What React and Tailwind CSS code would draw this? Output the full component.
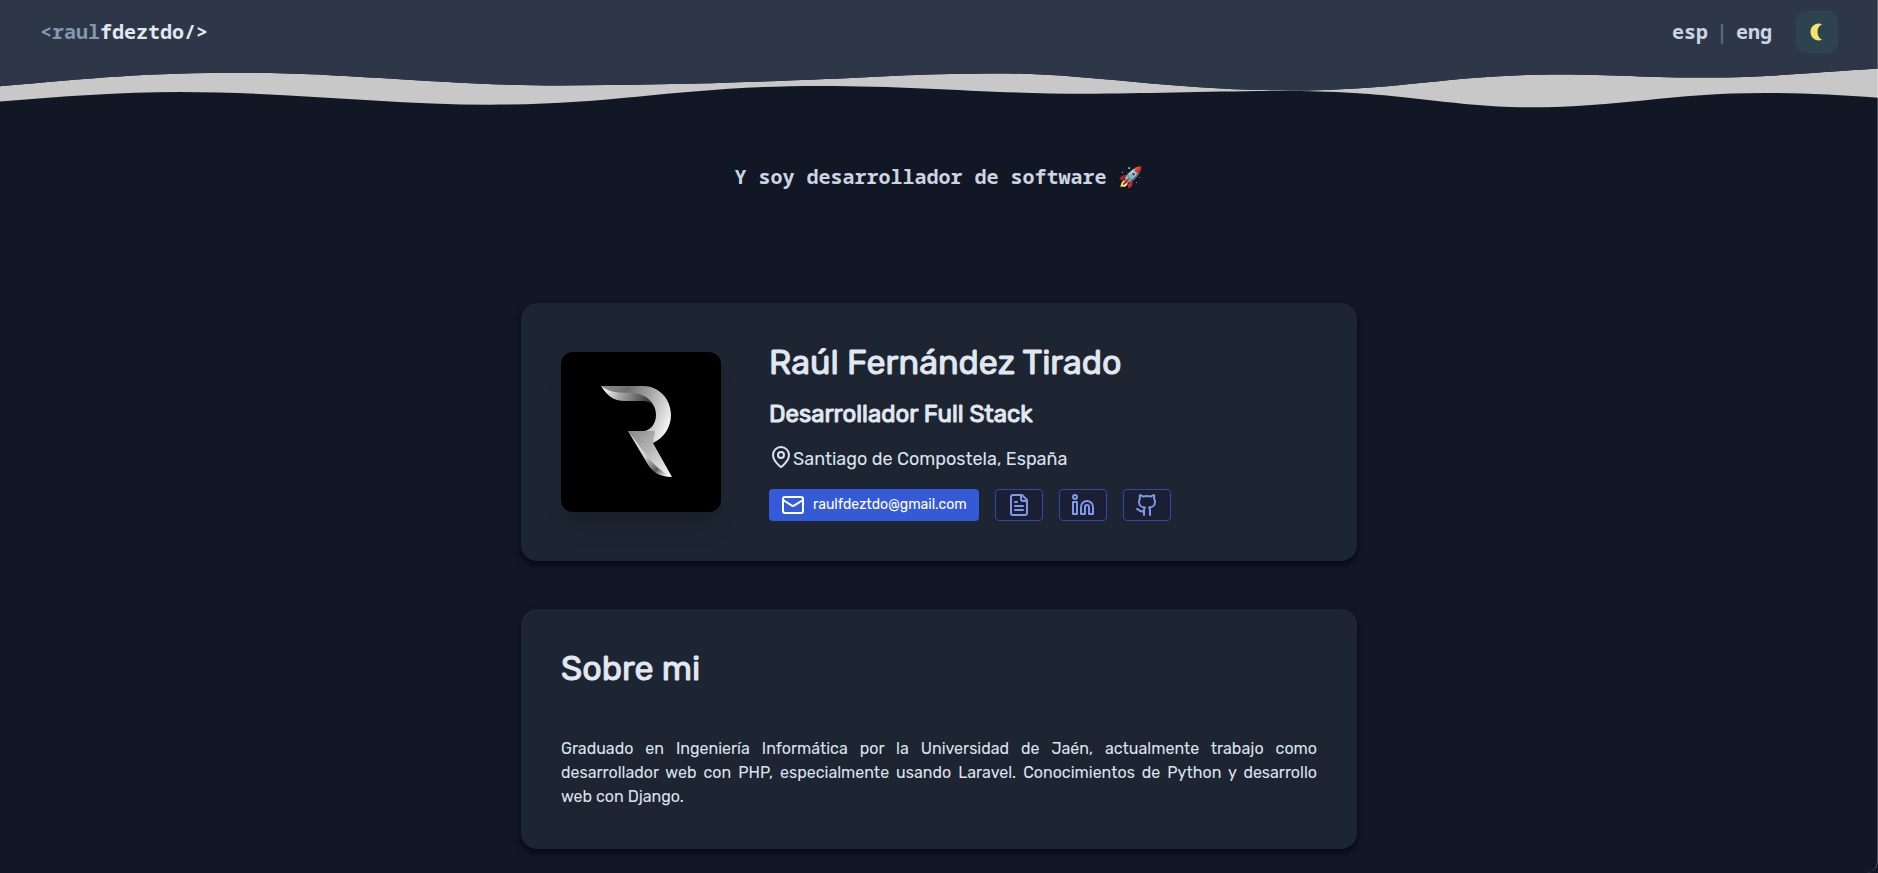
import { useState } from "react";
import { LuMail, LuMapPin, LuFileText, LuLinkedin, LuGithub } from "react-icons/lu";

const MONO = "font-['Noto_Sans_Mono','DejaVu_Sans_Mono',monospace]";
const HEADING = "font-normal [-webkit-text-stroke:1px_#e2e8f0]";

function Waves() {
  return (
    <svg
      className="block h-[120px] w-full"
      viewBox="0 0 1878 120"
      preserveAspectRatio="none"
      aria-hidden="true"
    >
      <path
        fill="#c8c8c8"
        d="M0 86.3 C90 78 150 72.7 240 72.7 C350 72.7 440 85.4 560 85.4 C640 85.4 740 83 826 79 C880 76.500 930 73.400 999 73.400 C1090 73.400 1170 90.500 1290 90.500 C1400 90.500 1450 74.400 1560 74.400 C1610 74.400 1650 77.600 1710 77.600 C1760 77.600 1810 73 1878 68.600 V97.700 C1840 95 1800 93 1765 93 C1670 93 1620 107.300 1530 107.300 C1450 107.300 1400 91 1290 91 C1210 91 1150 93.700 1085 93.700 C990 93.700 920 85.900 820 85.900 C680 85.900 620 104.700 490 104.700 C390 104.700 290 92 180 92 C120 92 60 96.500 0 101.500 Z"
      />
      <path
        fill="#2d3748"
        d="M0 0 H1878 V68.600 C1810 73 1760 77.600 1710 77.600 C1650 77.600 1610 74.400 1560 74.400 C1450 74.400 1400 90.500 1290 90.500 C1170 90.500 1090 73.400 999 73.400 C930 73.400 880 76.500 826 79 C740 83 640 85.400 560 85.400 C440 85.400 350 72.700 240 72.700 C150 72.700 90 78 0 86.300 Z"
      />
    </svg>
  );
}

function Monogram() {
  return (
    <svg viewBox="0 0 160 160" className="size-40" role="img" aria-label="Logotipo R">
      <defs>
        <linearGradient id="bowl" gradientUnits="userSpaceOnUse" x1="42" y1="40" x2="110" y2="66">
          <stop offset="0" stopColor="#8a8a8a" />
          <stop offset="0.3" stopColor="#6f6f6f" />
          <stop offset="0.6" stopColor="#a2a2a2" />
          <stop offset="1" stopColor="#f2f2f2" />
        </linearGradient>
        <linearGradient id="tail" gradientUnits="userSpaceOnUse" x1="42" y1="36" x2="92" y2="50">
          <stop offset="0" stopColor="#ffffff" />
          <stop offset="0.35" stopColor="#a8a8a8" />
          <stop offset="1" stopColor="#2b2b2b" />
        </linearGradient>
        <linearGradient id="leg" gradientUnits="userSpaceOnUse" x1="68" y1="82" x2="108" y2="124">
          <stop offset="0" stopColor="#8c8c8c" />
          <stop offset="0.5" stopColor="#bdbdbd" />
          <stop offset="1" stopColor="#f5f5f5" />
        </linearGradient>
        <linearGradient id="edge" gradientUnits="userSpaceOnUse" x1="68" y1="80" x2="104" y2="126">
          <stop offset="0" stopColor="#e8e8e8" />
          <stop offset="0.5" stopColor="#d0d0d0" />
          <stop offset="0.8" stopColor="#5e5e5e" />
          <stop offset="1" stopColor="#ffffff" />
        </linearGradient>
      </defs>
      <path fill="url(#bowl)" d="M40 34 H82 C98 34 110 47 110 63 C110 75 103 86 92 91 L88 93 L67 79 H82 C89 79 95 72 95 63 C95 55 91 49 84 46 C72 41 52 43 40 34 Z" />
      <path fill="url(#tail)" d="M40 34 C50 41 60 40.500 72 41 C82 42 89 46 92 53 C89 50 86 49 82 49 H64 C52 49 46 43 40 34 Z" />
      <path fill="url(#leg)" d="M67 79 H94 L92 91 L111 125 C101 122 92 115 87 107 Z" />
      <path fill="url(#edge)" d="M67 79 L87 105 C93 113 101 120 111 125 C99 125 91 120 86 111 Z" />
    </svg>
  );
}

const links = [
  { label: "Currículum", href: "#cv", Icon: LuFileText },
  { label: "LinkedIn", href: "#linkedin", Icon: LuLinkedin },
  { label: "GitHub", href: "#github", Icon: LuGithub },
];

export default function App() {
  const [, setDark] = useState(true);
  return (
    <div className="min-h-screen overflow-hidden bg-[#111724] font-['Rubik','Roboto',sans-serif] text-[#e2e8f0]">
      <header className={`relative ${MONO} text-xl font-bold`}>
        <Waves />
        <div className="absolute inset-x-0 top-0 flex h-16 items-center justify-between px-10">
          <a href="#inicio">
            <span className="text-[#8296b0]">&lt;raul</span>
            <span>fdeztdo/&gt;</span>
          </a>
          <nav className="flex items-center gap-6 text-[#cbd5e0]">
            <div className="flex items-center gap-2">
              <a href="#esp">esp</a>
              <span className="text-[#56677f]">|</span>
              <a href="#eng">eng</a>
            </div>
            <button
              type="button"
              aria-label="Cambiar tema"
              onClick={() => setDark((d) => !d)}
              className="flex size-[42px] items-center justify-center rounded-[10px] bg-[#2d4450]"
            >
              <svg viewBox="0 0 20 20" className="size-5" fill="#f0e36b" aria-hidden="true">
                <path d="M15 2.200 C9 0 3.500 4 3.500 10 C3.500 16 9 20 15 17.800 C11.800 16 10.500 13.500 10.500 10 C10.500 6.500 11.800 4 15 2.200 Z" />
              </svg>
            </button>
          </nav>
        </div>
      </header>

      <main className="mx-auto flex max-w-[836px] flex-col">
        <p className={`${MONO} mt-[43px] text-center text-xl leading-7 font-bold text-[#cbd5e0]`}>
          Y soy desarrollador de software 🚀
        </p>

        <section className="mt-28 flex items-center gap-12 rounded-2xl bg-[#1d2533] p-10 shadow-[0_4px_6px_rgba(0,3,16,0.7)]">
          <div className="overflow-hidden rounded-xl bg-black shadow-xl">
            <Monogram />
          </div>
          <div className="flex flex-col items-start">
            <h1 className={`text-[34px] leading-10 ${HEADING}`}>Raúl Fernández Tirado</h1>
            <h2 className={`mt-[15px] text-2xl leading-8 ${HEADING}`}>Desarrollador Full Stack</h2>
            <p className="mt-[15px] flex items-start text-lg leading-7 text-[#dbe3ec]">
              <LuMapPin className="size-6" />
              Santiago de Compostela, España
            </p>
            <div className="mt-4 flex gap-4">
              <a
                href="mailto:raulfdeztdo@gmail.com"
                className="flex h-8 items-center gap-2 rounded bg-[#355ad8] px-3 text-sm text-white"
              >
                <LuMail className="size-6" />
                raulfdeztdo@gmail.com
              </a>
              {links.map(({ label, href, Icon }) => (
                <a
                  key={label}
                  href={href}
                  aria-label={label}
                  className="flex h-8 w-12 items-center justify-center rounded border border-[#3049a5] bg-[#1a1f33] text-[#8098ec]"
                >
                  <Icon className="size-6" />
                </a>
              ))}
            </div>
          </div>
        </section>

        <section className="mt-12 rounded-2xl bg-[#1d2533] p-10 shadow-[0_4px_6px_rgba(0,3,16,0.7)]">
          <h2 className={`text-[34px] leading-10 ${HEADING}`}>Sobre mi</h2>
          <p className="mt-12 text-justify text-base leading-6 text-[#dbe3ec]">
            Graduado en Ingeniería Informática por la Universidad de Jaén, actualmente trabajo como
            desarrollador web con PHP, especialmente usando Laravel. Conocimientos de Python y
            desarrollo web con Django.
          </p>
        </section>
      </main>
      <div className="pointer-events-none fixed inset-0 rounded-br-xl border-r border-white/25" />
    </div>
  );
}
